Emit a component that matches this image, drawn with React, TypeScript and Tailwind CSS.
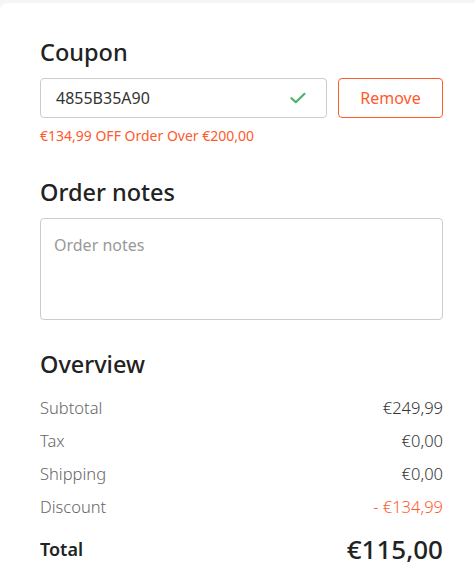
import React from "react";

const ff = { fontFamily: '"Noto Sans", "Open Sans", sans-serif' };

export default function App() {
  return (
    <div className="min-h-[588px] w-[475px] bg-[#f5f5f5] pt-[3px]" style={ff}>
      <div className="min-h-[585px] rounded-tl-[8px] bg-white pl-10 pr-8 pt-[34px] pb-6">
        <h2 className="text-[23.5px] font-medium leading-[30px] text-[#222]">Coupon</h2>
        <div className="mt-[11px] flex gap-[11px]">
          <div className="flex h-10 flex-1 items-center rounded-[4px] border border-[#cccccc] pl-[15px] pr-[20px]">
            <span className="flex-1 text-[16px] text-[#333]">4855B35A90</span>
            <svg width="16" height="12" viewBox="0 0 16 12" fill="none">
              <path d="M1.5 6.2 L5.8 10.2 L14.5 1.8" stroke="#4cb26a" strokeWidth="2.2" strokeLinecap="round" strokeLinejoin="round" />
            </svg>
          </div>
          <button className="h-10 w-[105px] rounded-[4px] border border-[#ff5a2c] text-[16px] text-[#ff5a2c]">
            Remove
          </button>
        </div>
        <p className="mt-[8px] text-[14px] leading-[20px] text-[#ff5a2c]">€134,99 OFF Order Over €200,00</p>

        <h2 className="mt-[31px] text-[23.5px] font-medium leading-[30px] text-[#222]">Order notes</h2>
        <div className="mt-[11px] h-[102px] rounded-[4px] border border-[#cccccc] px-[13px] pt-[14px]">
          <span className="text-[16px] text-[#999]">Order notes</span>
        </div>

        <h2 className="mt-[29px] text-[23.5px] font-medium leading-[30px] text-[#222]">Overview</h2>
        <div className="mt-[13px] flex flex-col text-[16.5px] font-light">
          <div className="flex h-[33px] items-center justify-between">
            <span className="text-[#666]">Subtotal</span>
            <span className="text-[#333]">€249,99</span>
          </div>
          <div className="flex h-[33px] items-center justify-between">
            <span className="text-[#666]">Tax</span>
            <span className="text-[#333]">€0,00</span>
          </div>
          <div className="flex h-[33px] items-center justify-between">
            <span className="text-[#666]">Shipping</span>
            <span className="text-[#333]">€0,00</span>
          </div>
          <div className="flex h-[32px] items-center justify-between">
            <span className="text-[#666]">Discount</span>
            <span className="text-[#ff5a2c]">- €134,99</span>
          </div>
        </div>
        <div className="mt-[7px] flex items-center justify-between">
          <span className="text-[18px] font-semibold text-[#222]">Total</span>
          <span className="text-[26px] font-medium text-[#222]">€115,00</span>
        </div>
      </div>
    </div>
  );
}
